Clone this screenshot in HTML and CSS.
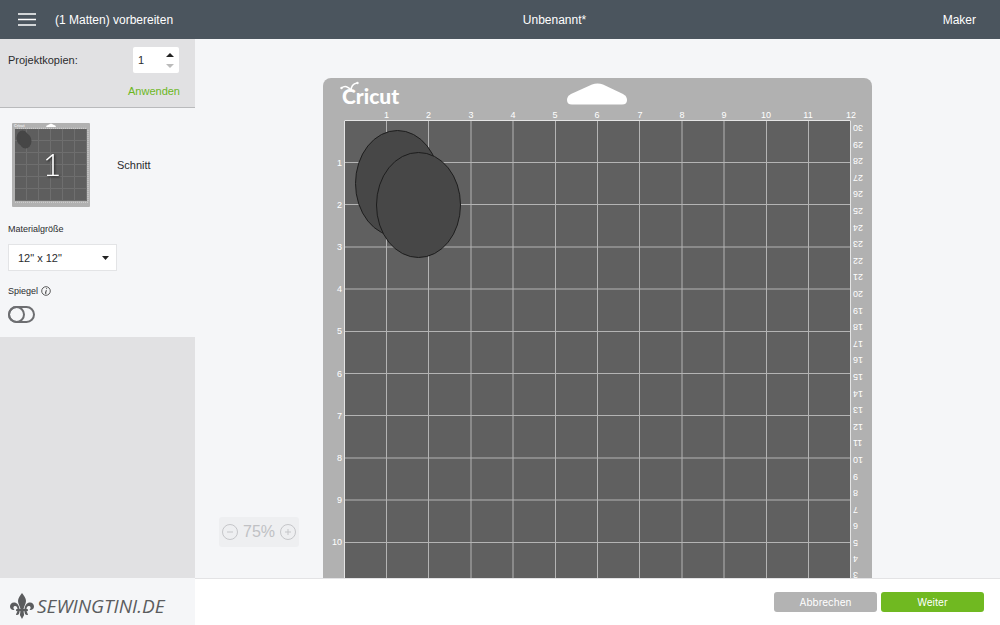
FILE: index.html
```
<!DOCTYPE html>
<html lang="de">
<head>
<meta charset="utf-8">
<title>Unbenannt*</title>
<link rel="stylesheet" href="styles.css">
</head>
<body>
<header class="topbar">
  <div class="topbar-left">
    <button class="menu" type="button" aria-label="Menü"><svg width="18" height="13" viewBox="0 0 18 13"><path d="M0 1h18M0 6.5h18M0 12h18" stroke="#fff" stroke-width="1.3"/></svg></button>
    <span>(1 Matten) vorbereiten</span>
  </div>
  <h1 class="title">Unbenannt*</h1>
  <span class="machine">Maker</span>
</header>

<div class="workspace">
  <aside class="sidebar">
    <form class="copies">
      <div class="copies-row">
        <label for="copies">Projektkopien:</label>
        <div class="stepper">
          <input id="copies" type="text" inputmode="numeric" value="1">
          <div class="steps">
            <button type="button" aria-label="Mehr"><svg width="8" height="4" viewBox="0 0 8 4"><path d="M0 4L4 0l4 4z" fill="#222"/></svg></button>
            <button type="button" aria-label="Weniger"><svg width="8" height="4" viewBox="0 0 8 4"><path d="M0 0l4 4 4-4z" fill="#bbb"/></svg></button>
          </div>
        </div>
      </div>
      <button class="apply" type="button">Anwenden</button>
    </form>
    <section class="settings">
      <div class="mat-item">
        <svg class="thumb" width="78" height="84" viewBox="0 0 78 84">
          <defs><pattern id="cell" width="12" height="12" patternUnits="userSpaceOnUse" x="3" y="6"><path d="M11.500 0v11.500H0" fill="none" stroke="#757575" stroke-width=".7"/></pattern></defs>
          <rect width="78" height="84" rx="1" fill="#b1b1b1"/>
          <path d="M34 3l5-2.400L44 3q0 1-1 1h-8q-1 0-1-1z" fill="#fff"/>
          <text x="2" y="4" class="thumb-brand">Cricut</text>
          <rect x="3" y="6" width="72" height="72" fill="#5e5e5e"/>
          <rect x="3" y="6" width="72" height="72" fill="url(#cell)"/>
          <path d="M5 5.300h70M76 7v71M3 79.300h73" stroke="#dadada" stroke-width=".8" stroke-dasharray="1 1"/>
          <ellipse cx="10.500" cy="15" rx="6" ry="7.500" fill="#464646"/>
          <ellipse cx="13.500" cy="18" rx="6" ry="7.500" fill="#464646"/>
          <text x="40" y="53" class="thumb-no">1</text>
        </svg>
        <span class="cut">Schnitt</span>
      </div>
      <label class="small" for="size">Materialgröße</label>
      <div class="select">
        <select id="size"><option>12" x 12"</option></select>
        <svg width="7" height="4" viewBox="0 0 7 4"><path d="M0 0h7L3.500 4z" fill="#222"/></svg>
      </div>
      <div class="mirror">
        <label class="small" for="mirror">Spiegel</label>
        <svg width="10" height="10" viewBox="0 0 10 10" fill="none" stroke="#333"><circle cx="5" cy="5" r="4.300" stroke-width=".8"/><path d="M5.300 4.200L4.500 7.400h.8M5.600 2.300v.8" stroke-width="1"/></svg>
      </div>
      <input class="toggle" id="mirror" type="checkbox">
    </section>
  </aside>

  <main class="canvas">
    <div class="zoom">
      <button type="button" aria-label="Verkleinern"><svg width="16" height="16" viewBox="0 0 16 16"><circle cx="8" cy="8" r="7.500"/><path d="M5 8h6"/></svg></button>
      <span>75%</span>
      <button type="button" aria-label="Vergrößern"><svg width="16" height="16" viewBox="0 0 16 16"><circle cx="8" cy="8" r="7.500"/><path d="M5 8h6M8 5v6"/></svg></button>
    </div>
    <svg class="mat" width="549" height="600" viewBox="0 0 549 600">
      <rect width="549" height="620" rx="8" fill="#b1b1b1"/>
      <path d="M248 16L269 6.500q5.500-2 11 0l20 9.500q4 2 4 6 0 4.500-5 4.500H249q-5 0-5-4.500 0-4 4-6z" fill="#fff"/>
      <text x="19" y="26" class="brand">Cricut</text>
      <path d="M18.500 10q5-4 10 3M28 13q0-7 6-8" fill="none" stroke="#fff" stroke-width="1.500" stroke-linecap="round"/>
      <circle cx="34.500" cy="5" r="1.200" fill="#fff"/>
      <circle cx="18.500" cy="10" r="1.200" fill="#fff"/>
      <rect x="21" y="42" width="507" height="560" fill="#606060"/>
      <g class="lines">
        <path d="M63.500 42v560M105.500 42v560M148 42v560M190 42v560M232.500 42v560M274.500 42v560M316.500 42v560M359 42v560M401 42v560M443.500 42v560M485.500 42v560"/>
        <path d="M21 84.500h507M21 126.500h507M21 169h507M21 211h507M21 253.500h507M21 295.500h507M21 337.500h507M21 380h507M21 422h507M21 464.500h507"/>
      </g>
      <path class="edge" d="M21.500 602V42.500h506V602"/>
      <g class="shape">
        <ellipse cx="74.500" cy="105.500" rx="42" ry="53"/>
        <ellipse cx="95.500" cy="127" rx="42" ry="52.500"/>
      </g>
      <g class="top">
        <text x="63.500" y="40">1</text><text x="105.500" y="40">2</text><text x="148" y="40">3</text><text x="190" y="40">4</text><text x="232" y="40">5</text><text x="274" y="40">6</text><text x="317" y="40">7</text><text x="359" y="40">8</text><text x="401" y="40">9</text><text x="443" y="40">10</text><text x="485" y="40">11</text><text x="528" y="40">12</text>
      </g>
      <g class="left">
        <text x="19" y="88">1</text><text x="19" y="130">2</text><text x="19" y="172">3</text><text x="19" y="214">4</text><text x="19" y="256">5</text><text x="19" y="299">6</text><text x="19" y="341">7</text><text x="19" y="383">8</text><text x="19" y="425">9</text><text x="19" y="467">10</text>
      </g>
      <!-- centimetre scale, readable from the opposite side of the mat -->
      <g class="cm" transform="rotate(180)">
        <text x="-530" y="-47">30</text><text x="-530" y="-64">29</text><text x="-530" y="-80">28</text><text x="-530" y="-97">27</text><text x="-530" y="-113">26</text><text x="-530" y="-130">25</text><text x="-530" y="-147">24</text><text x="-530" y="-163">23</text><text x="-530" y="-180">22</text><text x="-530" y="-196">21</text><text x="-530" y="-213">20</text><text x="-530" y="-230">19</text><text x="-530" y="-246">18</text><text x="-530" y="-263">17</text><text x="-530" y="-279">16</text><text x="-530" y="-296">15</text><text x="-530" y="-313">14</text><text x="-530" y="-329">13</text><text x="-530" y="-346">12</text><text x="-530" y="-362">11</text><text x="-530" y="-379">10</text><text x="-530" y="-396">9</text><text x="-530" y="-412">8</text><text x="-530" y="-429">7</text><text x="-530" y="-445">6</text><text x="-530" y="-462">5</text><text x="-530" y="-478">4</text><text x="-530" y="-494">3</text>
      </g>
    </svg>
  </main>
</div>

<footer class="bottom">
  <div class="brandbar">
    <svg width="24" height="26" viewBox="0 0 24 26" fill="#5b5c5e">
      <path d="M12 0c2 3 4 5 4 8 0 3-2 5-2.500 8h-3C10 13 8 11 8 8c0-3 2-5 4-8z"/>
      <path d="M9.500 16C9 12 7 9.500 4 9.500 1.500 9.500 0 11.500 0 13.500 0 16 2 17.500 4.500 17 3 15.500 3 13.500 4.500 13 6.500 12.500 7.500 14 7.500 16z"/>
      <path d="M14.500 16c.5-4 2.500-6.500 5.500-6.500 2.500 0 4 2 4 4 0 2.500-2 4-4.500 3.500 1.500-1.500 1.500-3.500 0-4-2-.5-3 1-3 3z"/>
      <rect x="6" y="16" width="12" height="2.300" rx="1"/>
      <path d="M10.500 18h3l.6 4L12 26l-2.100-4zM9.500 18c0 3-1 4.500-3.500 4 .2-1.500 1-2.500 1.500-4zM14.500 18c0 3 1 4.500 3.500 4-.2-1.500-1-2.500-1.500-4z"/>
    </svg>
    <span>SEWINGTINI.DE</span>
  </div>
  <div class="actions">
    <button class="btn" type="button">Abbrechen</button>
    <button class="btn primary" type="button">Weiter</button>
  </div>
</footer>
</body>
</html>
```
FILE: styles.css
```
* { box-sizing: border-box; }
body {
  margin: 0;
  height: 100vh;
  display: flex;
  flex-direction: column;
  font: 11px/16px "Liberation Sans", Arial, sans-serif;
  color: #2b2c2e;
  background: #f5f6f8;
}
button, input, select { font: inherit; color: inherit; margin: 0; padding: 0; border: 0; background: none; }
button { cursor: pointer; }
svg { display: block; }

.topbar {
  flex: none;
  height: 39px;
  display: grid;
  grid-template-columns: 228px 1fr 113px;
  align-items: center;
  padding: 0 24px 0 18px;
  background: #4b555e;
  color: #fff;
  font-size: 12px;
}
.topbar-left { display: flex; align-items: center; gap: 19px; }
.title { margin: 0; font-size: 12px; font-weight: 400; text-align: center; }
.machine { text-align: right; }

.workspace { flex: 1; min-height: 0; display: flex; }
.sidebar { flex: none; width: 195px; background: #e1e1e3; }
.copies { padding: 8px 15px 6px 8px; border-bottom: 1px solid #b9babc; }
.copies-row { display: flex; justify-content: space-between; align-items: center; padding-right: 1px; }
.stepper { display: flex; width: 46px; height: 26px; background: #fff; border-radius: 2px; padding: 0 5px; }
.stepper input { width: 28px; outline: 0; }
.steps { display: flex; flex-direction: column; justify-content: center; gap: 7px; }
.steps button { line-height: 0; }
.apply { display: block; margin: 10px 0 2px auto; color: #6cb71e; }

.settings { height: 229px; padding: 15px 8px 12px; background: #f5f6f8; }
.mat-item { display: flex; align-items: center; gap: 27px; padding-left: 4px; margin-bottom: 14px; }
.thumb-brand { font: 700 4px Lato, sans-serif; fill: #eee; }
.thumb-no { font: 300 32px Lato, sans-serif; fill: #fff; text-anchor: middle; filter: drop-shadow(1px 1px 1px #222); }
.small { display: block; font-size: 9px; line-height: 16px; }
.select { display: grid; align-items: center; width: 109px; height: 27px; margin: 7px 0 12px; background: #fff; border: 1px solid #e3e4e6; }
.select select { grid-area: 1 / 1; appearance: none; width: 100%; height: 100%; padding: 0 9px; }
.select svg { grid-area: 1 / 1; justify-self: end; margin-right: 7px; pointer-events: none; }
.mirror { display: flex; align-items: center; gap: 3px; margin-bottom: 7px; }
.toggle { appearance: none; display: flex; width: 27px; height: 17px; border: 2px solid #6d6e71; border-radius: 9px; }
.toggle::before { content: ""; box-sizing: border-box; flex: none; width: 17px; height: 17px; margin: -2px; border: 2px solid #6d6e71; border-radius: 50%; }
.toggle:checked { justify-content: flex-end; }

.canvas { flex: 1; position: relative; overflow: hidden; padding-top: 39px; }
.mat { margin: 0 auto; }
.zoom {
  position: absolute;
  left: 24px;
  bottom: 31px;
  display: flex;
  align-items: center;
  justify-content: space-between;
  width: 80px;
  height: 30px;
  padding: 0 3px;
  border-radius: 3px;
  background: #eeeff1;
  color: #c0c1c4;
  font-size: 16px;
}
.zoom svg { fill: none; stroke: #c5c6c9; }

.brand { font: 900 21px Lato, sans-serif; fill: #fff; }
.lines { fill: none; stroke: #b4b4b4; stroke-width: 1; }
.edge { fill: none; stroke: #e4e4e4; stroke-width: 1; }
.shape { fill: #474747; stroke: #1d1d1d; stroke-width: 1; }
.top, .left, .cm { fill: #fff; font: 9px "Liberation Sans", Arial, sans-serif; }
.top { text-anchor: middle; }
.left, .cm { text-anchor: end; }

.bottom { flex: none; display: flex; height: 47px; background: #fff; }
.brandbar { display: flex; align-items: center; gap: 3px; width: 195px; padding: 8px 0 0 10px; background: #f5f6f8; color: #5b5c5e; font: italic 400 19px/24px "Open Sans", sans-serif; }
.actions { flex: 1; display: flex; align-items: center; justify-content: flex-end; gap: 4px; padding-right: 16px; border-top: 1px solid #e3e3e5; }
.btn { width: 103px; height: 20px; border-radius: 3px; background: #b3b3b3; color: #fff; font: 10px/20px Inter, sans-serif; }
.primary { background: #70b921; }
```
